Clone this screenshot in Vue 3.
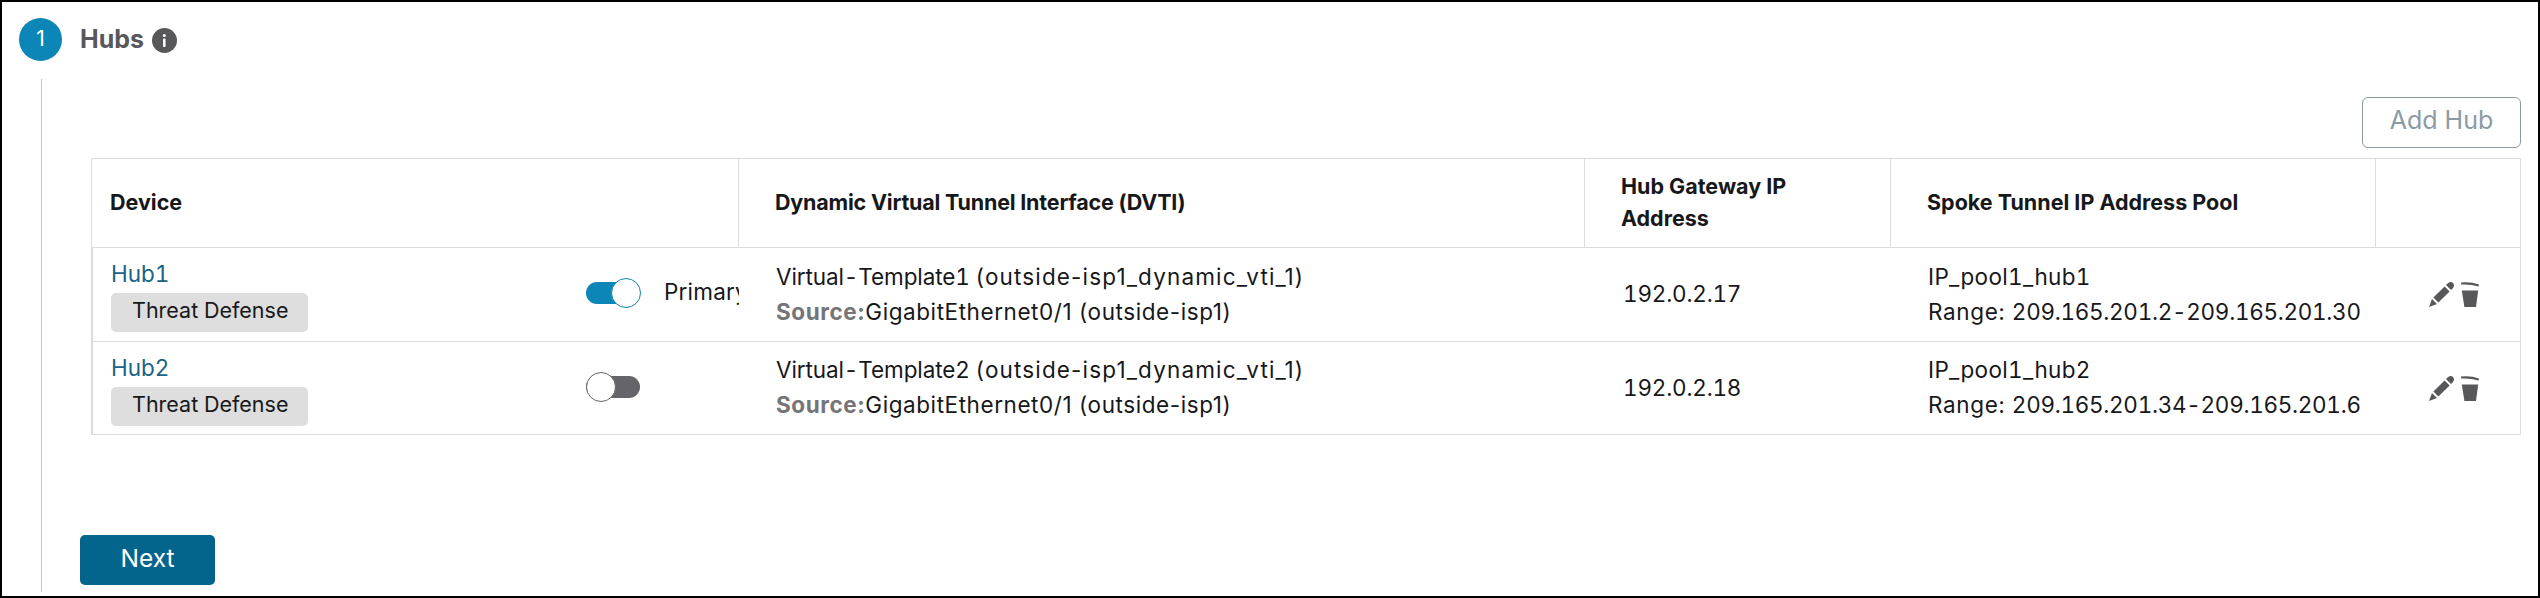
<template>
  <div class="page">
    <aside class="rail">
      <div class="step-number">1</div>
      <div class="rail-line"></div>
    </aside>

    <section class="content">
      <header class="step-header">
        <h2 class="step-title">Hubs</h2>
        <svg class="info-icon" viewBox="0 0 25 25" xmlns="http://www.w3.org/2000/svg">
          <circle cx="12.5" cy="12.5" r="12.5" fill="#58585b"/>
          <circle cx="12.3" cy="7.6" r="1.5" fill="white"/>
          <rect x="11" y="10.4" width="2.6" height="8.6" rx="1" fill="white"/>
        </svg>
      </header>

      <div class="toolbar">
        <button class="btn-add" disabled>Add Hub</button>
      </div>

      <div class="hub-table">
        <div class="row head">
          <div class="cell">Device</div>
          <div class="cell tight">Dynamic Virtual Tunnel Interface (DVTI)</div>
          <div class="cell">Hub Gateway IP<br>Address</div>
          <div class="cell">Spoke Tunnel IP Address Pool</div>
          <div class="cell"></div>
        </div>

        <div v-for="hub in hubs" :key="hub.name" class="row body">
          <div class="cell device-cell">
            <div class="device">
              <a class="device-name">{{ hub.name }}</a>
              <span class="badge">Threat Defense</span>
            </div>
            <button class="toggle" :class="{ on: hub.primary }" @click="setPrimary(hub)">
              <span class="knob"></span>
            </button>
            <span v-if="hub.primary" class="primary-label">Primary</span>
          </div>
          <div class="cell">
            <div class="lines">
              <div><span class="template">{{ hub.template }}</span> <span class="vti">({{ hub.vti }})</span></div>
              <div class="source-line"><span class="source">Source:</span>{{ hub.source }}</div>
            </div>
          </div>
          <div class="cell gateway">{{ hub.gateway }}</div>
          <div class="cell">
            <div class="lines">
              <div class="pool">{{ hub.pool }}</div>
              <div class="pool-range"><span class="range-label">Range: </span>{{ hub.range }}</div>
            </div>
          </div>
          <div class="cell actions">
            <svg class="icon-edit" viewBox="0 0 25 25" xmlns="http://www.w3.org/2000/svg">
              <path d="M0 25 L3 17 L8 22 Z M4.4 15.6 L15.6 4.4 L20.6 9.4 L9.4 20.6 Z M17 3 L18.6 1.4 Q21.4 -1.2 24 1 Q26.2 3.6 23.6 6.4 L22 8 Z"/>
            </svg>
            <svg class="icon-delete" viewBox="0 0 18 25" xmlns="http://www.w3.org/2000/svg">
              <path d="M0 0.6 Q9 -0.6 18 2.6 L17.6 4.6 Q9 2 0.2 2.6 Z M0.8 8.4 H17.2 L15 25 H3.4 Z"/>
            </svg>
          </div>
        </div>
      </div>

      <button class="btn-next">Next</button>
    </section>
  </div>
</template>

<script setup>
import { ref } from 'vue'

const hubs = ref([
  {
    name: 'Hub1',
    primary: true,
    template: 'Virtual-Template1',
    vti: 'outside-isp1_dynamic_vti_1',
    source: 'GigabitEthernet0/1 (outside-isp1)',
    gateway: '192.0.2.17',
    pool: 'IP_pool1_hub1',
    range: '209.165.201.2-209.165.201.30'
  },
  {
    name: 'Hub2',
    primary: false,
    template: 'Virtual-Template2',
    vti: 'outside-isp1_dynamic_vti_1',
    source: 'GigabitEthernet0/1 (outside-isp1)',
    gateway: '192.0.2.18',
    pool: 'IP_pool1_hub2',
    range: '209.165.201.34-209.165.201.6'
  }
])

const setPrimary = (hub) => {
  hubs.value.forEach((item) => {
    item.primary = item === hub
  })
}
</script>

<style>
body {
  margin: 0;
}
</style>

<style scoped>
.page {
  box-sizing: border-box;
  width: 100%;
  height: 598px;
  display: flex;
  border: 2px solid #000;
  background: white;
  color: #17181a;
  font-family: Inter, "Liberation Sans", sans-serif;
  font-size: 22.5px;
  overflow: hidden;
}

.rail {
  width: 78px;
  padding: 16px 0 4px 17px;
  box-sizing: border-box;
  display: flex;
  flex-direction: column;
}

.step-number {
  width: 43px;
  height: 43px;
  flex: none;
  border-radius: 50%;
  background: #0b86b6;
  color: white;
  font-size: 21px;
  line-height: 41px;
  text-align: center;
}

.rail-line {
  flex: 1;
  width: 1px;
  margin: 18px 0 0 22px;
  background: #c4c4c6;
}

.content {
  flex: 1;
  min-width: 0;
  display: flex;
  flex-direction: column;
}

.step-header {
  display: flex;
  align-items: center;
  height: 43px;
  padding-top: 16px;
}

.step-title {
  margin: 0;
  padding-bottom: 1px;
  font-size: 25px;
  font-weight: 700;
  color: #58585b;
}

.info-icon {
  width: 25px;
  height: 25px;
  margin: 2px 0 0 8px;
}

.toolbar {
  display: flex;
  justify-content: flex-end;
  padding: 36px 17px 10px 0;
}

.btn-add {
  box-sizing: border-box;
  width: 159px;
  height: 51px;
  padding: 0 0 6px;
  border: 1px solid #8b98a2;
  border-radius: 6px;
  background: white;
  color: #8b9aa5;
  font-family: inherit;
  font-size: 25px;
}

.hub-table {
  margin: 0 17px 0 11px;
  border: 1px solid #dcdcdd;
  border-bottom: none;
}

.row {
  display: grid;
  grid-template-columns: 647px 846px 306px 485px 1fr;
  border-bottom: 1px solid #dcdcdd;
}

.cell {
  display: flex;
  align-items: center;
  padding-left: 37px;
  white-space: nowrap;
  min-width: 0;
}

.head {
  height: 88px;
  font-size: 21.5px;
  font-weight: 700;
  line-height: 32px;
}

.head .cell {
  display: block;
  align-content: center;
  padding-bottom: 2px;
  padding-left: 36px;
  border-right: 1px solid #dcdcdd;
}

.head .cell:first-child {
  padding-left: 18px;
}

.head .cell:last-child {
  border-right: none;
}

.tight {
  letter-spacing: -0.2px;
}

.body {
  height: 93px;
  font-variant-numeric: tabular-nums;
}

.body:last-child {
  height: 92px;
}

.body .device-cell {
  align-items: flex-start;
  padding-left: 18px;
  border-left: 1px solid #dcdcdd;
  overflow: hidden;
}

.device {
  flex: none;
  width: 475px;
  padding-top: 9px;
}

.device-name {
  display: block;
  height: 34px;
  margin-bottom: 2px;
  line-height: 34px;
  color: #1a6385;
  cursor: pointer;
}

.badge {
  box-sizing: border-box;
  display: block;
  width: 197px;
  height: 39px;
  padding-left: 21px;
  border-radius: 5px;
  background: #dedede;
  font-size: 21.5px;
  line-height: 35px;
}

.toggle {
  flex: none;
  display: flex;
  align-items: center;
  width: 54px;
  height: 22px;
  margin-top: 34px;
  padding: 0;
  border: none;
  border-radius: 11px;
  background: #64646a;
  cursor: pointer;
}

.knob {
  box-sizing: border-box;
  flex: none;
  width: 30px;
  height: 30px;
  border: 1px solid #64646a;
  border-radius: 50%;
  background: white;
}

.toggle.on {
  background: #0b86b6;
}

.toggle.on .knob {
  margin-left: 25px;
  border-color: #0b86b6;
}

.primary-label {
  margin-left: 24px;
  line-height: 88px;
  letter-spacing: 0.2px;
}

.lines {
  padding-bottom: 2px;
  line-height: 35px;
}

.template {
  letter-spacing: -0.1px;
}

.vti {
  font-variant-numeric: normal;
  letter-spacing: 1.15px;
}

.source-line {
  font-variant-numeric: normal;
  letter-spacing: 0.57px;
}

.source {
  font-weight: 700;
  color: #757577;
}

.gateway {
  padding-left: 38px;
  padding-bottom: 2px;
  letter-spacing: -0.2px;
}

.pool {
  letter-spacing: 0.35px;
}

.pool-range {
  letter-spacing: -0.3px;
}

.range-label {
  letter-spacing: 0.65px;
}

.actions {
  gap: 7px;
  padding-left: 53px;
}

.actions svg {
  fill: #58585b;
}

.icon-edit {
  width: 25px;
  height: 25px;
}

.icon-delete {
  width: 18px;
  height: 25px;
}

.btn-next {
  width: 135px;
  height: 50px;
  margin-top: 100px;
  padding: 0 0 4px;
  border: none;
  border-radius: 5px;
  background: #03658c;
  color: white;
  font-family: inherit;
  font-size: 24.5px;
  cursor: pointer;
}
</style>
